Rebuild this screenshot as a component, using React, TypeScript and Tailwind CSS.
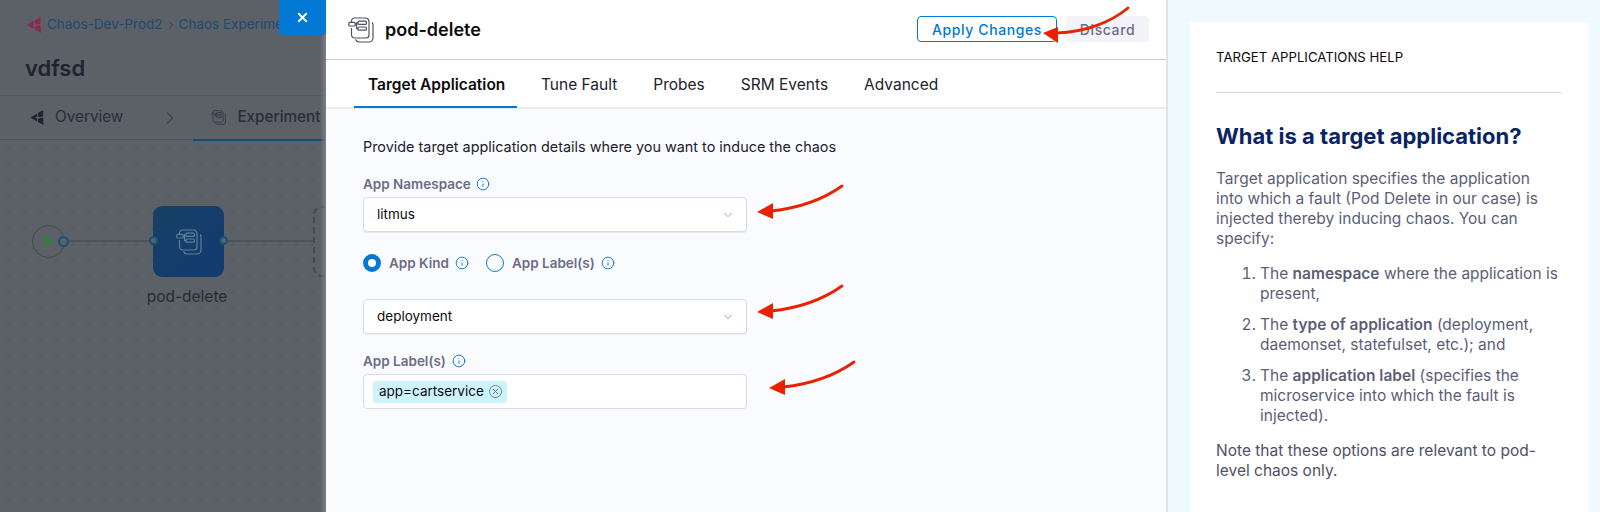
import { ChevronDown, ChevronRight, Info, X } from "lucide-react";

const FONT = "font-['Inter','Noto_Sans',sans-serif]";

function FaultIcon({ className, color }: { className: string; color: string }) {
  return (
    <svg viewBox="0 0 26 26" fill="none" stroke={color} strokeWidth="1.2" className={className}>
      <path d="M3.5 5V4a3 3 0 0 1 3-3h11a3.5 3.5 0 0 1 3.5 3.5V18a3 3 0 0 1-3 3H7a3.5 3.5 0 0 1-3.5-3.5V11" />
      <path d="M24 5.5a3 3 0 0 1 1 2.5v13a4 4 0 0 1-4 4H11a4 4 0 0 1-3.5-2.5" />
      <rect x="0.8" y="5.4" width="6.4" height="3.6" rx="1" />
      <rect x="10" y="4.2" width="8.4" height="3.2" rx="1" />
      <rect x="10" y="10" width="8.4" height="3.2" rx="1" />
      <path d="M7.2 7.2H8.6V5.8H10M8.6 7.2v4.4H10" />
    </svg>
  );
}

function ChaosLogo({ className, color }: { className: string; color: string }) {
  return (
    <svg viewBox="0 0 14 16" fill={color} className={className}>
      <path d="M0 8 7.2 3.6 7 7.2 5.2 8.2 7 9.4 7.2 12.2Z" />
      <path d="M8 3.2 13.6 0 13.5 6.4 10.8 7.6 8 6.8Z" />
      <path d="M8 9.4 10.8 8.6 13.5 8 13.9 16 8 12.8Z" />
    </svg>
  );
}

function Arrow({ className, d, head }: { className: string; d: string; head: string }) {
  return (
    <svg viewBox="0 0 90 40" fill="none" className={className}>
      <path d={d} stroke="#e62200" strokeWidth="2.8" strokeLinecap="round" />
      <path d={head} fill="#e62200" />
    </svg>
  );
}

function InfoMark({ className = "" }: { className?: string }) {
  return <Info className={`w-[14px] h-[14px] text-[#0278d5] ${className}`} strokeWidth={1.6} />;
}

function SelectBox({ value }: { value: string }) {
  return (
    <div className="flex items-center justify-between h-[35px] w-[384px] bg-white border border-[#d9dae5] rounded pl-[13px] pr-[11px] text-[13.5px] text-[#0b0b0d] shadow-[0_1px_1px_rgba(96,97,112,0.1)]">
      <span>{value}</span>
      <ChevronDown className="w-[14px] h-[14px] text-[#9293ab]" strokeWidth={1.5} />
    </div>
  );
}

function Background() {
  return (
    <div className="relative w-[326px] shrink-0 h-full bg-[#5b6167] overflow-hidden">
      <div className="flex items-center h-[50px] pl-[27px] pb-[1px] text-[13.5px] text-[#1f4a72] whitespace-nowrap">
        <ChaosLogo className="w-[14px] h-[16px] mr-[6px]" color="#8c2a47" />
        <span>Chaos-Dev-Prod2</span>
        <ChevronRight className="w-[12px] h-[12px] mx-[2px] text-[#31363d]" strokeWidth={1.5} />
        <span>Chaos Experiments</span>
      </div>
      <div className="h-[45px] pl-[25px] pt-[3px] text-[22px] leading-[30px] font-semibold text-[#20242f]">vdfsd</div>
      <div className="flex items-center h-[45px] border-t border-b border-[#4f555b] pl-[30px] text-[15.3px] text-[#2a2e3b] whitespace-nowrap">
        <ChaosLogo className="w-[14px] h-[15px] mr-[11px]" color="#20242f" />
        <span>Overview</span>
        <ChevronRight className="w-[20px] h-[20px] ml-[37px] mr-[31px] text-[#3f4450]" strokeWidth={1.5} />
        <FaultIcon className="w-[15px] h-[15px] mr-[11px]" color="#2a2e3b" />
        <span className="font-medium">Experiment</span>
      </div>
      <div className="absolute left-[193px] right-0 top-[139px] h-[2px] bg-[#144c7c]" />
      <div className="absolute inset-x-0 top-[141px] bottom-0 bg-[radial-gradient(#484d53_0.6px,transparent_0.8px)] bg-[length:16px_16px]" />

      {/* pipeline nodes */}
      <div className="absolute left-[32px] top-[225px] w-[33px] h-[33px] rounded-full bg-[#5b6167] border border-[#454a50] flex items-center pl-[11px]">
        <svg viewBox="0 0 10 13" className="w-[10px] h-[13px]" fill="#3b7a3f">
          <path d="M0 0 10 6.5 0 13Z" />
        </svg>
      </div>
      <div className="absolute left-[63px] right-[175px] top-[240px] h-[2px] bg-[#4d5258]" />
      <div className="absolute left-[224px] right-[13px] top-[240px] h-[2px] bg-[#4d5258]" />
      <div className="absolute left-[58px] top-[236px] w-[11px] h-[11px] rounded-full bg-[#5b6167] border-2 border-[#15527f]" />
      <div className="absolute left-[153px] top-[206px] w-[71px] h-[71px] rounded-[9px] bg-gradient-to-br from-[#164065] to-[#133b70] flex items-center justify-center">
        <FaultIcon className="w-[26px] h-[26px]" color="#5f7f9b" />
      </div>
      <div className="absolute left-[149px] top-[236px] w-[9px] h-[9px] rounded-full bg-[#5b6167] border-2 border-[#15527f]" />
      <div className="absolute left-[219px] top-[236px] w-[9px] h-[9px] rounded-full bg-[#5b6167] border-2 border-[#15527f]" />
      <div className="absolute left-[313px] top-[206px] w-[40px] h-[71px] rounded-[9px] border-2 border-dashed border-[#454955]" />
      <div className="absolute left-[137px] top-[286px] w-[100px] text-center text-[15.5px] leading-[22px] text-[#272b36]">pod-delete</div>

      <div className="absolute inset-y-0 right-0 w-[6px] bg-gradient-to-r from-transparent to-[#7b7f84]" />
      <button className="absolute right-0 top-0 w-[47px] h-[35px] bg-[#0278d5] rounded-bl-[3px] rounded-br-[3px] flex items-center justify-center">
        <X className="w-[15px] h-[15px] text-white" strokeWidth={3} />
      </button>
    </div>
  );
}

function Drawer() {
  return (
    <div className="w-[842px] shrink-0 h-full flex flex-col bg-[#fafbff] border-r-2 border-[#e3e3ea]">
      <div className="h-[60px] shrink-0 bg-white border-b-[1.5px] border-[#c9cad6] flex items-center pl-[22px] pr-[17px]">
        <FaultIcon className="w-[26px] h-[26px] mr-[11px]" color="#4f5162" />
        <h1 className="text-[18px] font-semibold text-[#0b0b0d]">pod-delete</h1>
        <button className="ml-auto w-[140px] h-[26px] mt-[-1px] border border-[#0278d5] rounded text-[14px] font-medium tracking-[0.6px] text-[#0278d5]">
          Apply Changes
        </button>
        <button className="ml-[9px] w-[83px] h-[26px] mt-[-1px] rounded bg-[#f3f3fa] text-[14px] font-medium tracking-[0.6px] text-[#6b6d85]">
          Discard
        </button>
      </div>
      <div className="h-[49px] shrink-0 bg-white border-b-2 border-[#ebebf2] flex pl-[28px] text-[15.5px] text-[#22222a] relative">
        <div className="px-[14px] w-[163px] pt-[13px] font-semibold text-[#0b0b0d] border-b-2 border-[#0278d5] h-[48px] whitespace-nowrap">
          Target Application
        </div>
        <div className="ml-[24px] pt-[13px]">Tune Fault</div>
        <div className="ml-[36px] pt-[13px]">Probes</div>
        <div className="ml-[36px] pt-[13px]">SRM Events</div>
        <div className="ml-[36px] pt-[13px]">Advanced</div>
      </div>
      <div className="pl-[37px] pt-[28px]">
        <p className="text-[14.4px] leading-[20px] text-[#22222a]">Provide target application details where you want to induce the chaos</p>
        <div className="flex items-center gap-[6px] mt-[17px] mb-[3px] h-[20px] text-[13.5px] font-semibold text-[#6b6d85]">
          App Namespace <InfoMark className="-ml-[1px]" />
        </div>
        <SelectBox value="litmus" />
        <div className="flex items-center h-[20px] mt-[21px] text-[13.5px] font-semibold text-[#6b6d85]">
          <span className="w-[18px] h-[18px] rounded-full border-[5px] border-[#0278d5] bg-white mr-[8px]" />
          App Kind
          <InfoMark className="ml-[6px]" />
          <span className="w-[18px] h-[18px] rounded-full border border-[#0278d5] bg-white ml-[17px] mr-[8px]" />
          App Label(s)
          <InfoMark className="ml-[6px]" />
        </div>
        <div className="mt-[26px]">
          <SelectBox value="deployment" />
        </div>
        <div className="flex items-center gap-[6px] mt-[18px] mb-[4px] h-[18px] text-[13.5px] font-semibold text-[#6b6d85]">
          App Label(s) <InfoMark />
        </div>
        <div className="flex items-center h-[35px] w-[384px] bg-white border border-[#d9dae5] rounded pl-[9px]">
          <span className="flex items-center gap-[5px] h-[22px] w-[134px] pl-[6px] rounded-[3px] bg-[#cdf4fe] text-[13.5px] text-[#0b0b0d]">
            app=cartservice
            <span className="w-[13px] h-[13px] rounded-full border border-[#6f8a94] flex items-center justify-center">
              <X className="w-[9px] h-[9px] text-[#54707b]" strokeWidth={2.5} />
            </span>
          </span>
        </div>
      </div>
    </div>
  );
}

function HelpPanel() {
  return (
    <div className="flex-1 h-full bg-[#eefaff] pl-[22px] pr-[12px] pt-[22px]">
      <div className="h-full bg-white pl-[26px] pr-[26px] pt-[25px] text-[15.5px] leading-[20px] text-[#4f5162]">
        <div className="text-[13.2px] leading-[20px] text-[#0b0b0d] pb-[25px] border-b border-[#d9dae5]">TARGET APPLICATIONS HELP</div>
        <h2 className="mt-[28px] text-[22px] leading-[30px] font-bold text-[#0a2463]">What is a target application?</h2>
        <p className="mt-[18px] pr-[12px] text-[#5c5e75]">
          Target application specifies the application into which a fault (Pod Delete in our case) is injected thereby inducing chaos. You can specify:
        </p>
        <ol className="list-decimal pl-[44px] mt-[15px] space-y-[11px] text-[#5c5e75]">
          <li>The <b className="font-semibold">namespace</b> where the application is present,</li>
          <li>The <b className="font-semibold">type of application</b> (deployment, daemonset, statefulset, etc.); and</li>
          <li>The <b className="font-semibold">application label</b> (specifies the microservice into which the fault is injected).</li>
        </ol>
        <p className="mt-[15px]">Note that these options are relevant to pod-level chaos only.</p>
      </div>
    </div>
  );
}

export default function App() {
  return (
    <div className={`relative flex w-[1600px] h-[512px] overflow-hidden ${FONT}`}>
      <Background />
      <Drawer />
      <HelpPanel />

      {/* red annotation arrows */}
      <Arrow className="absolute left-[1041px] top-[6px] w-[90px] h-[40px]" d="M87 2C70 16 45 26 16 27" head="M2 27 17 21 17 37Z" />
      <Arrow className="absolute left-[755px] top-[184px] w-[90px] h-[40px]" d="M87 2C70 14 45 24 16 27" head="M2 28 18 19 18 35Z" />
      <Arrow className="absolute left-[755px] top-[284px] w-[90px] h-[40px]" d="M87 2C70 14 45 24 16 27" head="M2 28 18 19 18 35Z" />
      <Arrow className="absolute left-[767px] top-[360px] w-[90px] h-[40px]" d="M87 2C70 14 45 24 16 27" head="M2 28 18 19 18 35Z" />
    </div>
  );
}
